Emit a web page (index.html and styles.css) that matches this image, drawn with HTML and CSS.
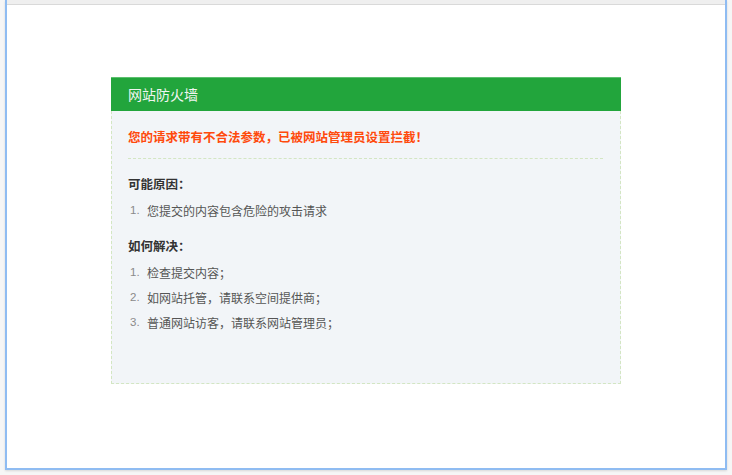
FILE: index.html
```html
<!DOCTYPE html>
<html lang="zh-CN">
<head>
<meta charset="utf-8">
<title>网站防火墙</title>
<link rel="stylesheet" href="styles.css">
</head>
<body>
<div class="window">
  <div class="topbar"></div>
  <div class="content">
    <div class="card">
      <div class="card-head">网站防火墙</div>
      <div class="card-body">
        <p class="alert">您的请求带有不合法参数，已被网站管理员设置拦截！</p>
        <div class="sep"></div>
        <h3 class="title">可能原因：</h3>
        <ol class="list">
          <li><span class="num">1.</span><span class="txt">您提交的内容包含危险的攻击请求</span></li>
        </ol>
        <h3 class="title second">如何解决：</h3>
        <ol class="list">
          <li><span class="num">1.</span><span class="txt">检查提交内容；</span></li>
          <li><span class="num">2.</span><span class="txt">如网站托管，请联系空间提供商；</span></li>
          <li><span class="num">3.</span><span class="txt">普通网站访客，请联系网站管理员；</span></li>
        </ol>
      </div>
    </div>
  </div>
</div>
</body>
</html>
```
FILE: styles.css
```css
html, body {
  margin: 0;
  padding: 0;
}
body {
  width: 732px;
  height: 475px;
  background: #f6f6f6;
  font-family: "Noto Sans CJK SC", "Noto Sans", sans-serif;
  overflow: hidden;
}
.window {
  margin-left: 5px;
  width: 718px;
  height: 468px;
  background: #ffffff;
  border-left: 2px solid #8fbcf2;
  border-right: 2px solid #8fbcf2;
  border-bottom: 2px solid #8fbcf2;
  box-shadow: 0 1px 2px rgba(0,0,0,0.12);
}
.topbar {
  height: 4px;
  background: #efefef;
  border-bottom: 1px solid #d9d9d9;
}
.content {
  padding-top: 72px;
}
.card {
  width: 510px;
  margin: 0 auto;
}
.card-head {
  height: 34px;
  line-height: 33px;
  background: #22a53c;
  border-top: 1px solid #5cc06e;
  box-sizing: border-box;
  padding-left: 17px;
  color: #f1f5f1;
  font-size: 14px;
}
.card-body {
  background: #f2f5f8;
  border: 1px dashed #d3e6c3;
  border-top: none;
  height: 273px;
  box-sizing: border-box;
  padding: 16px 17px 0 16px;
}
.alert {
  margin: 0;
  font-size: 12.5px;
  line-height: 20px;
  font-weight: bold;
  color: #ff4a0c;
}
.sep {
  margin-top: 11px;
  height: 0;
  border-top: 1px dashed #d3e6c3;
}
.title {
  margin: 12px 0 2px;
  font-size: 12.5px;
  line-height: 25px;
  font-weight: bold;
  color: #333333;
}
.title.second {
  margin-top: 10px;
}
.list {
  margin: 0;
  padding: 0;
  list-style: none;
}
.list li {
  display: flex;
  line-height: 25px;
  font-size: 12px;
}
.num {
  width: 17px;
  padding-left: 2px;
  font-family: "Liberation Sans", Arial, sans-serif;
  font-size: 11.5px;
  color: #8a8a8a;
}
.txt {
  color: #555555;
}
```
